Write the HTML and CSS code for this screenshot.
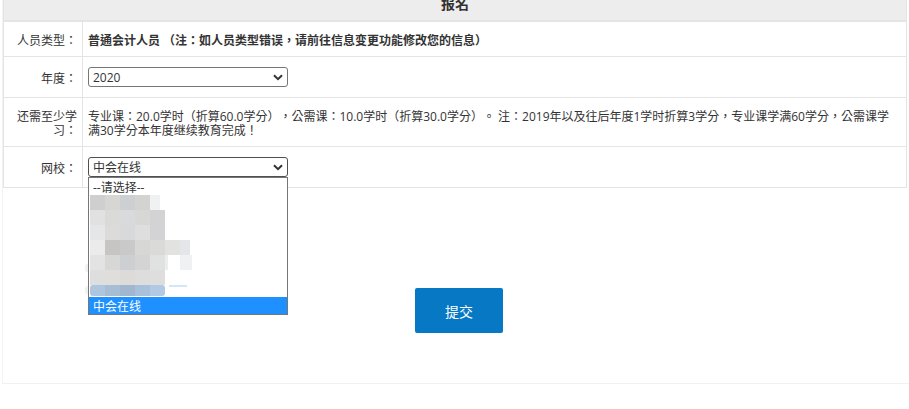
FILE: index.html
```html
<!DOCTYPE html>
<html lang="zh-CN">
<head>
<meta charset="utf-8">
<title>报名</title>
<link rel="stylesheet" href="styles.css">
</head>
<body>
<main class="panel">
  <table class="form">
    <colgroup><col class="col-label"><col></colgroup>
    <thead>
      <tr><th colspan="2" class="title">报名</th></tr>
    </thead>
    <tbody>
      <tr class="r1">
        <td class="label">人员类型：</td>
        <td class="text strong">普通会计人员 （注：如人员类型错误，请前往信息变更功能修改您的信息）</td>
      </tr>
      <tr class="r2">
        <td class="label">年度：</td>
        <td class="control">
          <div class="select"><span>2020</span><svg class="chev" viewBox="0 0 10 7" width="10" height="7"><path d="M1 1.2 5 5.2 9 1.2" fill="none" stroke="#333" stroke-width="2"/></svg></div>
        </td>
      </tr>
      <tr class="r3">
        <td class="label">还需至少学习：</td>
        <td class="text">专业课：20.0学时（折算60.0学分），公需课：10.0学时（折算30.0学分）。 注：2019年以及往后年度1学时折算3学分，专业课学满60学分，公需课学满30学分本年度继续教育完成！</td>
      </tr>
      <tr class="r4">
        <td class="label">网校：</td>
        <td class="control">
          <div class="select-wrap">
            <div class="select open"><span>中会在线</span><svg class="chev" viewBox="0 0 10 7" width="10" height="7"><path d="M1 1.2 5 5.2 9 1.2" fill="none" stroke="#333" stroke-width="2"/></svg></div>
            <div class="bump bump-a"></div>
            <div class="bump bump-b"></div>
            <div class="menu">
              <div class="option">--请选择--</div>
              <div class="mosaic">
                <i class="c-cf"></i><i class="c-d6"></i><i class="c-cd"></i><i class="c-d3"></i><i class="c-f0 w10"></i><i></i><i></i>
                <i class="c-e1"></i><i class="c-da"></i><i class="c-d8"></i><i class="c-d7"></i><i class="c-d2"></i><i></i><i></i>
                <i class="c-e5"></i><i class="c-dc"></i><i class="c-d9"></i><i class="c-de"></i><i class="c-d2"></i><i></i><i></i>
                <i class="c-eb"></i><i class="c-c6"></i><i class="c-c9"></i><i class="c-d7"></i><i class="c-da"></i><i class="c-e2"></i><i class="c-e5 w10"></i>
                <i class="c-e3"></i><i class="c-d7"></i><i class="c-cd"></i><i class="c-d4"></i><i class="c-e0"></i><i class="c-ec w3"></i><i class="c-f0"></i>
                <i class="c-de"></i><i class="c-df"></i><i class="c-dc"></i><i class="c-dd"></i><i class="c-de"></i><i></i><i></i>
              </div>
              <div class="blue-row">
                <i class="b1"></i><i class="b2"></i><i class="b3"></i><i class="b4"></i><i class="b5"></i>
              </div>
              <div class="blue-stub"></div>
              <div class="option selected">中会在线</div>
            </div>
          </div>
        </td>
      </tr>
    </tbody>
  </table>
  <div class="actions"><button class="submit" type="button">提交</button></div>
</main>
</body>
</html>
```
FILE: styles.css
```css
* { box-sizing: border-box; }
html, body { margin: 0; padding: 0; background: #fff; overflow: hidden; }
body { height: 409px; font-family: "Open Sans", "Noto Sans CJK TC", "Noto Sans CJK SC", sans-serif; font-size: 12px; color: #333; font-feature-settings: "locl" 0; text-spacing-trim: space-all; }
.panel { margin: -4px 0 0 2px; height: 388px; border-left: 1px solid #f3f3f3; border-bottom: 1px solid #f0f0f2; }
.form { width: 904px; border-collapse: collapse; table-layout: fixed; }
.col-label { width: 79px; }
.title { height: 25px; background: #ededed; border: 1px solid #e4e4e4; border-width: 0 1px 2px 1px; font-size: 14px; font-weight: 700; text-align: center; line-height: 14px; vertical-align: bottom; padding: 0 0 9px; }
.form td { border: 1px solid #e4e4e4; line-height: 14px; }
.form .label { text-align: right; padding: 5px 5px 0 9px; }
.form .text { padding: 5px 8px 0 5px; }
.form .control { padding: 1px 5px 0; }
.r1 td { height: 35px; }
.r2 td { height: 41px; }
.r3 td { height: 49px; }
.r4 td { height: 41px; }
.strong { font-weight: 700; }
.select { width: 200px; height: 20px; border: 1px solid #767676; border-radius: 3px; display: flex; align-items: center; justify-content: space-between; padding: 0 4px; background: #fff; }
.select span { padding-top: 2px; }
.select.open { border-color: #4f4f4f; }
.select-wrap { position: relative; width: 200px; }
.menu { position: absolute; top: 20px; left: 0; width: 200px; height: 138px; border: 1px solid #767676; background: #fff; z-index: 2; }
.option { height: 17px; line-height: 19px; padding-left: 4px; }
.selected { position: absolute; left: 0; right: 0; bottom: 0; background: #1e90ff; color: #fff; }
.bump { position: absolute; left: -3px; width: 5px; height: 8px; border-radius: 3px; background: #f1f1f1; }
.bump-a { top: 107px; }
.bump-b { top: 129px; }
.mosaic { position: absolute; left: 1px; top: 17px; display: grid; grid-template-columns: repeat(6, 15px) 12px; grid-auto-rows: 15px; }
.mosaic i { display: block; }
.w10 { width: 10px; }
.w3 { width: 3px; }
.c-c6 { background: #c6c5c3; }
.c-c9 { background: #c9c9c9; }
.c-cd { background: #cdd0d2; }
.c-cf { background: #cfcfcf; }
.c-d2 { background: #d3d3d5; }
.c-d3 { background: #d3d3d1; }
.c-d4 { background: #d4d4d4; }
.c-d6 { background: #d6d7d3; }
.c-d7 { background: #d7d7d6; }
.c-d8 { background: #d8dadc; }
.c-d9 { background: #d8d9db; }
.c-da { background: #dadad9; }
.c-dc { background: #dcdbd9; }
.c-dd { background: #dddddd; }
.c-de { background: #dedede; }
.c-df { background: #dfdedc; }
.c-e0 { background: #e0e2e1; }
.c-e1 { background: #e1e1e1; }
.c-e2 { background: #e2e2e0; }
.c-e3 { background: #e3e3e3; }
.c-e5 { background: #e5e6e8; }
.c-eb { background: #ebebeb; }
.c-ec { background: #ecedee; }
.c-f0 { background: #f0f1f3; }
.blue-row { position: absolute; left: 1px; top: 107px; height: 11px; display: flex; border-radius: 3px; overflow: hidden; }
.blue-row i { display: block; width: 15px; }
.b1 { background: #adc5de; }
.b2 { background: #a6bdd4; }
.b3 { background: #a1b7d0; }
.b4 { background: #a9c0da; }
.b5 { background: #b1c9e3; }
.blue-stub { position: absolute; left: 80px; top: 107px; width: 18px; height: 2px; background: #d3e6f8; }
.actions { display: flex; padding: 100px 0 0 412px; }
.submit { width: 88px; height: 45px; border: 0; border-radius: 2px; background: #0779c4; color: #fff; font: 14px "Open Sans", "Noto Sans CJK TC", "Noto Sans CJK SC", sans-serif; padding: 1px 0 0; }
```
